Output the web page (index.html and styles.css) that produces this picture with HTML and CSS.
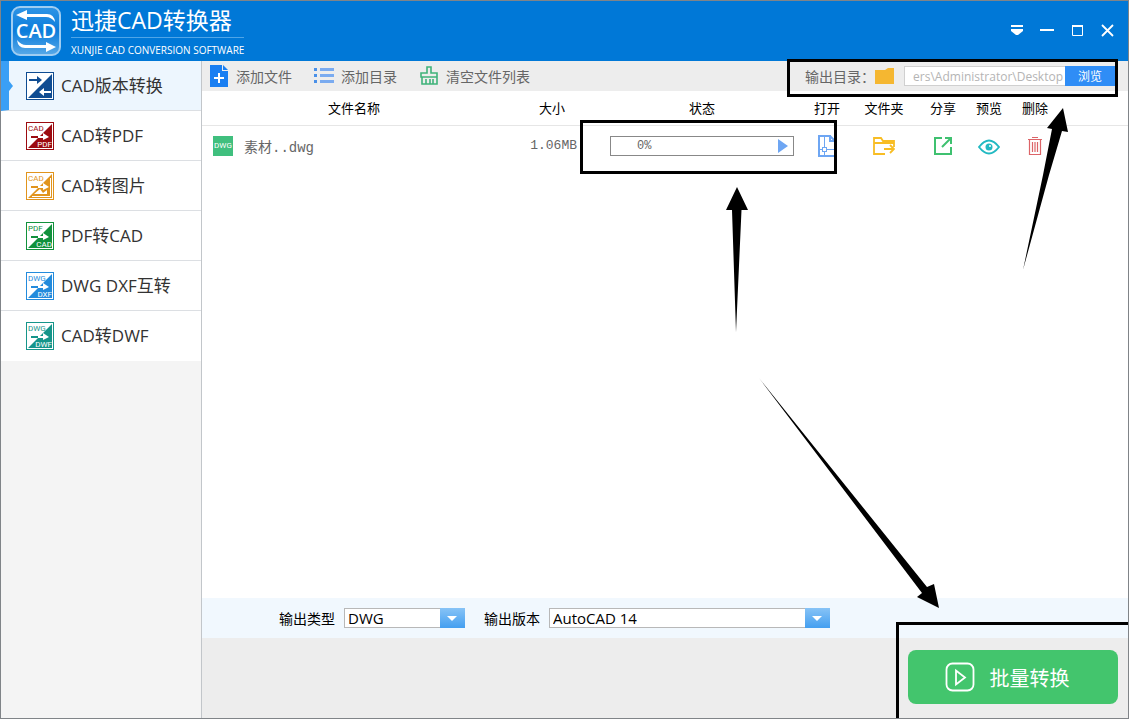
FILE: index.html
```html
<!DOCTYPE html>
<html lang="zh-CN">
<head>
<meta charset="utf-8">
<title>迅捷CAD转换器</title>
<link rel="stylesheet" href="styles.css">
</head>
<body>
<div class="window">
  <header class="titlebar">
    <svg class="logo" width="50" height="50" viewBox="0 0 50 50" aria-hidden="true">
      <defs><linearGradient id="lg" x1="0" y1="0" x2="0" y2="1"><stop offset="0" stop-color="#2f95e6"/><stop offset=".5" stop-color="#0b7cdb"/><stop offset="1" stop-color="#58a9e8"/></linearGradient></defs>
      <rect x="1" y="1" width="48" height="48" rx="8" fill="url(#lg)" stroke="#9fcdf2" stroke-width="2"/>
      <path d="M5 9l11-5v4h20q7 0 8 8q-4-5-9-5H16v3z" fill="#fff"/>
      <path d="M45 41l-10 5v-4H14q-7 0-8-8q4 5 9 5h20v-3z" fill="#fff"/>
      <text x="25" y="32" text-anchor="middle" class="logo-text">CAD</text>
    </svg>
    <div class="brand">
      <h1 class="brand-name">迅捷CAD转换器</h1>
      <p class="brand-sub">XUNJIE CAD CONVERSION SOFTWARE</p>
    </div>
    <div class="window-buttons">
      <button type="button" class="icon-button" aria-label="菜单"><svg width="14" height="14" viewBox="0 0 14 14"><path d="M1 1h12v2H1zM1 5h12v2L8 11H6L1 7z" fill="#fff"/></svg></button>
      <button type="button" class="icon-button" aria-label="最小化"><svg width="14" height="14" viewBox="0 0 14 14"><path d="M0 5h14v2H0z" fill="#fff"/></svg></button>
      <button type="button" class="icon-button" aria-label="最大化"><svg width="14" height="14" viewBox="0 0 14 14"><path d="M2.500 2.500h10v9h-10z" fill="none" stroke="#fff"/><path d="M2 1h11v2H2z" fill="#fff"/></svg></button>
      <button type="button" class="icon-button" aria-label="关闭"><svg width="14" height="14" viewBox="0 0 14 14"><path d="M2 1l11 11M13 1L2 12" stroke="#fff" stroke-width="1.800"/></svg></button>
    </div>
  </header>

  <div class="body">
    <nav class="sidebar">
      <a href="#version" class="nav-item active">
        <svg class="nav-icon blue" width="28" height="28" viewBox="0 0 28 28"><rect x=".5" y=".5" width="27" height="27" fill="#fff" stroke="currentColor"/><path d="M26 2v24H2z" fill="currentColor"/><path d="M3 7h8V4l5 4-5 4V9H3z" fill="currentColor"/><path d="M25 19h-7v-3l-5 4 5 4v-3h7z" fill="#fff"/></svg>
        CAD版本转换</a>
      <a href="#pdf" class="nav-item">
        <svg class="nav-icon red" width="28" height="28" viewBox="0 0 28 28"><rect x=".5" y=".5" width="27" height="27" fill="#fff" stroke="currentColor"/><path d="M26 2v24H2z" fill="currentColor"/><path d="M5 14h9v2H5z" fill="currentColor"/><path d="M12 14h5v-3l6 4-6 3v-2h-5z" fill="#fff"/><text x="2" y="9" class="mini" fill="currentColor">CAD</text><text x="26" y="25" text-anchor="end" class="mini" fill="#fff">PDF</text></svg>
        CAD转PDF</a>
      <a href="#image" class="nav-item">
        <svg class="nav-icon orange" width="28" height="28" viewBox="0 0 28 28"><rect x=".5" y=".5" width="27" height="27" fill="#fff" stroke="currentColor"/><path d="M26 2v24H2z" fill="currentColor"/><path d="M24.500 6v18.500H6" fill="none" stroke="#fff"/><path d="M5 14h9v2H5z" fill="currentColor"/><path d="M12 14h5v-3l6 4-6 3v-2h-5zM8 22l6-5 3 4 4-3v4z" fill="#fff"/><text x="2" y="9" class="mini" fill="currentColor">CAD</text></svg>
        CAD转图片</a>
      <a href="#tocad" class="nav-item">
        <svg class="nav-icon green" width="28" height="28" viewBox="0 0 28 28"><rect x=".5" y=".5" width="27" height="27" fill="#fff" stroke="currentColor"/><path d="M26 2v24H2z" fill="currentColor"/><path d="M5 14h9v2H5z" fill="currentColor"/><path d="M12 14h5v-3l6 4-6 3v-2h-5z" fill="#fff"/><text x="2" y="9" class="mini" fill="currentColor">PDF</text><text x="26" y="25" text-anchor="end" class="mini" fill="#fff">CAD</text></svg>
        PDF转CAD</a>
      <a href="#dxf" class="nav-item">
        <svg class="nav-icon sky" width="28" height="28" viewBox="0 0 28 28"><rect x=".5" y=".5" width="27" height="27" fill="#fff" stroke="currentColor"/><path d="M26 2v24H2z" fill="currentColor"/><path d="M5 14h9v2H5z" fill="currentColor"/><path d="M12 14h5v-3l6 4-6 3v-2h-5z" fill="#fff"/><text x="2" y="9" class="mini" fill="currentColor">DWG</text><text x="26" y="25" text-anchor="end" class="mini" fill="#fff">DXF</text></svg>
        DWG DXF互转</a>
      <a href="#dwf" class="nav-item">
        <svg class="nav-icon teal" width="28" height="28" viewBox="0 0 28 28"><rect x=".5" y=".5" width="27" height="27" fill="#fff" stroke="currentColor"/><path d="M26 2v24H2z" fill="currentColor"/><path d="M5 14h9v2H5z" fill="currentColor"/><path d="M12 14h5v-3l6 4-6 3v-2h-5z" fill="#fff"/><text x="2" y="9" class="mini" fill="currentColor">DWG</text><text x="26" y="25" text-anchor="end" class="mini" fill="#fff">DWF</text></svg>
        CAD转DWF</a>
    </nav>

    <main class="main">
      <div class="toolbar">
        <button type="button" class="tool"><svg width="20" height="22" viewBox="0 0 20 22"><path d="M1 0h12v6h6v16H1z" fill="#1a7ff2"/><path d="M14 0l5 5h-5z" fill="#1a7ff2"/><path d="M5 13h10M10 8v10" stroke="#fff" stroke-width="2"/></svg>添加文件</button>
        <button type="button" class="tool"><svg width="20" height="22" viewBox="0 0 20 22"><path d="M0 3h3v3H0zM0 9h3v3H0zM0 15h3v3H0z" fill="#4a90e8"/><path d="M6 3h14v3H6zM6 9h14v3H6zM6 15h14v3H6z" fill="#7aabf0"/></svg>添加目录</button>
        <button type="button" class="tool"><svg width="20" height="22" viewBox="0 0 20 22"><path d="M8 8V2h4v6h6v4H2V8zM3 12v7h15v-7M7 14v5M11 14v5M14 14v5" fill="none" stroke="#3fb27a" stroke-width="1.600"/></svg>清空文件列表</button>
        <div class="output-dir">
          <label for="dir">输出目录：</label>
          <svg class="folder" width="20" height="18" viewBox="0 0 20 18"><path d="M0 3h10l3-2h6v16H0z" fill="#f5b731"/></svg>
          <input id="dir" class="dir-input" type="text" value="ers\Administrator\Desktop">
          <button type="button" class="browse">浏览</button>
        </div>
      </div>

      <div class="list">
        <table class="files">
          <colgroup><col><col class="c-size"><col class="c-status"><col class="c-open"><col class="c-folder"><col class="c-action"><col class="c-action"><col class="c-action"><col class="c-end"></colgroup>
          <thead><tr><th>文件名称</th><th>大小</th><th>状态</th><th>打开</th><th>文件夹</th><th>分享</th><th>预览</th><th>删除</th><th></th></tr></thead>
          <tbody><tr>
            <td><div class="file"><span class="badge">DWG</span><span class="file-name">素材..dwg</span></div></td>
            <td class="size">1.06MB</td>
            <td><div class="progress"><span>0%</span><button type="button" class="icon-button" aria-label="开始"><svg width="12" height="14" viewBox="0 0 12 14"><path d="M1 0l10 7-10 7z" fill="#6ea6f3"/></svg></button></div></td>
            <td><button type="button" class="icon-button" aria-label="打开"><svg width="20" height="22" viewBox="0 0 20 22"><path d="M13 1H2v20h16V6h-5zM13 1l5 5" fill="none" stroke="#6ea6f3" stroke-width="2"/><path d="M7.500 2v19M2 14.500h16" stroke="#6ea6f3"/><rect x="5.500" y="12.500" width="4" height="4" fill="#fff" stroke="#6ea6f3"/></svg></button></td>
            <td><button type="button" class="icon-button" aria-label="文件夹"><svg width="22" height="20" viewBox="0 0 22 20"><path d="M12 18H1V2h7l2 3h11v6M1 7h20M11 13h10M17 9l4 4-4 4" fill="none" stroke="#f8bd24" stroke-width="1.800"/></svg></button></td>
            <td><button type="button" class="icon-button" aria-label="分享"><svg width="20" height="20" viewBox="0 0 20 20"><path d="M9 2H2v16h16v-7M12 2h6v6M18 2l-9 9" fill="none" stroke="#3fc170" stroke-width="2"/></svg></button></td>
            <td><button type="button" class="icon-button" aria-label="预览"><svg width="22" height="16" viewBox="0 0 22 16"><path d="M1 8Q11-5 21 8Q11 21 1 8z" fill="none" stroke="#22b9c2" stroke-width="1.900"/><circle cx="11" cy="8" r="3.500" fill="#22b9c2"/><circle cx="12" cy="7" r="1" fill="#fff"/></svg></button></td>
            <td><button type="button" class="icon-button" aria-label="删除"><svg width="16" height="20" viewBox="0 0 16 20"><path d="M1 3.500h14M5 1.500h6M2.500 3v15.500h11V3M5.500 6v10M8 6v10M10.500 6v10" fill="none" stroke="#dc6468" stroke-width="1.200"/></svg></button></td>
            <td></td>
          </tr></tbody>
        </table>
      </div>

      <div class="options">
        <label for="type">输出类型</label>
        <div class="select type"><select id="type"><option>DWG</option><option>DXF</option></select></div>
        <label for="ver">输出版本</label>
        <div class="select version"><select id="ver"><option>AutoCAD 14</option></select></div>
      </div>

      <footer class="footer">
        <button type="button" class="convert"><svg width="30" height="30" viewBox="0 0 30 30"><rect x="1.500" y="1.500" width="27" height="27" rx="6" fill="none" stroke="#fff" stroke-width="1.800"/><path d="M11 8.500v14l9-7z" fill="none" stroke="#fff" stroke-width="1.800"/></svg>批量转换</button>
      </footer>
    </main>
  </div>

  <svg class="notes" width="1129" height="719" viewBox="0 0 1129 719" aria-hidden="true">
    <g fill="none" stroke="#000" stroke-width="3">
      <rect x="788.500" y="60.500" width="328" height="35"/>
      <rect x="581.500" y="121.500" width="254" height="51"/>
      <path d="M1129 623.500H897.500V718"/>
    </g>
    <path d="M737 187l11 23h-6.500L736 332l-4-122h-6z"/>
    <path d="M1063 108l5 24-6-1L1049 175 1023 270 1043 175 1052 129l-5-1z"/>
    <path d="M939 608l-22-11 5-4L759 378 927 587l7-3z"/>
  </svg>
</div>
</body>
</html>
```
FILE: styles.css
```css
* { box-sizing: border-box; }

body {
  margin: 0;
  font-family: "Open Sans", "Noto Sans CJK SC", sans-serif;
  font-size: 14px;
  color: #000;
}

button, input, select { font: inherit; }

button {
  padding: 0;
  border: 0;
  background: none;
  cursor: pointer;
}

svg { display: block; flex: none; }

.window {
  position: relative;
  display: flex;
  flex-direction: column;
  min-height: 100vh;
  border: 1px solid #808488;
  overflow: hidden;
}

.titlebar {
  display: flex;
  align-items: center;
  height: 60px;
  padding: 0 12px 0 10px;
  background: #0078d7;
  color: #fff;
}

.logo-text {
  font-family: "Open Sans", sans-serif;
  font-size: 20px;
  font-weight: 600;
  fill: #fff;
}

.brand { margin-left: 10px; }

.brand-name {
  margin: 0;
  padding-bottom: 2px;
  border-bottom: 1px solid #4fa5e8;
  font-size: 23px;
  font-weight: 400;
  line-height: 30px;
}

.brand-sub {
  margin: 4px 0 0;
  font-size: 10px;
  line-height: 16px;
}

.window-buttons {
  display: flex;
  gap: 16px;
  margin-left: auto;
  padding-right: 2px;
}

.icon-button {
  display: inline-block;
  vertical-align: middle;
}

.body { display: flex; flex: 1; }

.sidebar {
  width: 201px;
  flex: none;
  border-right: 1px solid #c2c6ca;
  background: #f4f4f4;
}

.nav-item {
  position: relative;
  display: flex;
  align-items: center;
  gap: 7px;
  height: 50px;
  padding-left: 25px;
  border-bottom: 1px solid #dcdfe3;
  background: #fff;
  color: #333;
  font-size: 17px;
  line-height: 24px;
  text-decoration: none;
}

.nav-item:last-child { border-bottom: 0; }

.nav-item.active {
  padding-left: 17px;
  border-left: 8px solid #3a9ff5;
  background: #edf6fe;
}

.nav-item.active::before {
  content: "";
  position: absolute;
  left: 0;
  top: 20px;
  border: 5px solid transparent;
  border-left: 4px solid #3a9ff5;
  border-right: 0;
}

.mini { font: 8px Roboto, sans-serif; }
.blue { color: #0f4c92; }
.red { color: #9c0b10; }
.orange { color: #e1941d; }
.green { color: #11913c; }
.sky { color: #238bdc; }
.teal { color: #16958a; }

.main {
  display: flex;
  flex: 1;
  flex-direction: column;
  min-width: 0;
}

.toolbar {
  display: flex;
  align-items: center;
  gap: 22px;
  height: 30px;
  padding: 0 13px 0 7px;
  background: #ededed;
  color: #666;
}

.tool {
  display: flex;
  align-items: center;
  gap: 7px;
  color: inherit;
}

.output-dir {
  display: flex;
  align-items: center;
  margin-left: auto;
}

.folder { margin-right: 9px; }

.dir-input {
  width: 161px;
  height: 20px;
  padding: 0 2px;
  border: 1px solid #d0d0d0;
  border-right: 0;
  background: #fff;
  color: #b4b4b4;
  font-size: 12px;
  text-align: right;
}

.browse {
  width: 50px;
  height: 20px;
  background: #2f8df6;
  color: #fff;
  font-size: 12px;
}

.list { flex: 1; background: #fff; }

.files {
  width: 100%;
  border-collapse: collapse;
  table-layout: fixed;
}

.c-size { width: 92px; }
.c-status { width: 208px; }
.c-open { width: 42px; }
.c-folder { width: 72px; }
.c-action { width: 46px; }
.c-end { width: 70px; }

.files th {
  height: 34px;
  padding: 0;
  border-bottom: 1px solid #e6e6e6;
  font-size: 13px;
  font-weight: 400;
}

.files td {
  height: 41px;
  padding: 0;
  text-align: center;
}

.file {
  display: flex;
  align-items: center;
  gap: 11px;
  padding-left: 11px;
}

.badge {
  width: 20px;
  background: #40bf7e;
  color: #fff;
  font-family: Roboto, sans-serif;
  font-size: 8px;
  line-height: 20px;
}

.file-name, .files .size, .progress {
  font-family: "Liberation Mono", "Noto Sans CJK SC", monospace;
  color: #666;
}

.files .size {
  padding-right: 21px;
  font-size: 13px;
  text-align: right;
}

.progress {
  display: flex;
  align-items: center;
  justify-content: space-between;
  height: 20px;
  margin: 0 12px;
  padding: 0 4px 0 26px;
  border: 1px solid #888;
  font-size: 12px;
}

.options {
  display: flex;
  align-items: center;
  height: 40px;
  padding-left: 77px;
  background: #f1f8fe;
}

.select {
  position: relative;
  height: 20px;
  margin: 0 19px 0 9px;
}

.type { width: 121px; }
.version { width: 281px; }

.select select {
  display: block;
  width: 100%;
  height: 20px;
  padding: 0 28px 0 3px;
  border: 1px solid #b8b8b8;
  border-radius: 0;
  background: #fff;
  color: #000;
  font-size: 15px;
  line-height: 18px;
  appearance: none;
}

.select::before {
  content: "";
  position: absolute;
  top: 0;
  right: 0;
  width: 25px;
  height: 20px;
  background: linear-gradient(#87c3f6, #449ff0);
  pointer-events: none;
}

.select::after {
  content: "";
  position: absolute;
  top: 8px;
  right: 8px;
  border: 5px solid transparent;
  border-top-color: #fff;
  border-bottom: 0;
  pointer-events: none;
}

.footer {
  display: flex;
  align-items: center;
  justify-content: flex-end;
  height: 80px;
  padding: 0 10px 2px 0;
  background: #ededed;
}

.convert {
  display: flex;
  align-items: center;
  justify-content: center;
  gap: 15px;
  width: 210px;
  height: 54px;
  padding: 0 12px 0 0;
  border-radius: 8px;
  background: #43c56d;
  color: #fff;
  font-size: 20px;
}

.notes {
  position: absolute;
  top: -1px;
  left: -1px;
  pointer-events: none;
}
```
